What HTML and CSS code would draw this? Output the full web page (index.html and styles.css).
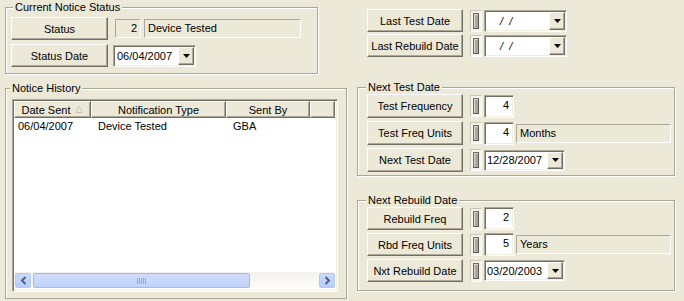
FILE: index.html
```html
<!DOCTYPE html>
<html lang="en">
  <head>
    <meta charset="UTF-8" />
    <link rel="stylesheet" href="styles.css">
    <title>Notice Status</title>
  </head>
  <body>
    <div class="form">
      <div class="left">
        <div class="group cur">
          <div class="group-title">Current Notice Status</div>
          <div class="row r1">
            <button class="btn">Status</button>
            <span class="field num">2</span>
            <span class="field desc">Device Tested</span>
          </div>
          <div class="row r2">
            <button class="btn">Status Date</button>
            <span class="combo date">06/04/2007<span class="drop"><svg width="7" height="4" viewBox="0 0 7 4"><polygon points="0,0 7,0 3.5,4" fill="#000"/></svg></span></span>
          </div>
        </div>

        <div class="group hist">
          <div class="group-title">Notice History</div>
          <div class="list">
            <div class="list-head">
              <span class="hc c1">Date Sent <svg class="sort" width="8" height="7" viewBox="0 0 8 7"><polygon points="4,0.5 7.5,6.5 0.5,6.5" fill="none" stroke="#c8c6bc"/></svg></span>
              <span class="hc c2">Notification Type</span>
              <span class="hc c3">Sent By</span>
              <span class="hc c4"></span>
            </div>
            <div class="list-body">
              <div class="list-row">
                <span class="c1">06/04/2007</span>
                <span class="c2">Device Tested</span>
                <span class="c3">GBA</span>
              </div>
            </div>
            <div class="hscroll">
              <span class="sb-btn"><svg width="7" height="9" viewBox="0 0 7 9"><polyline points="5.5,1 2,4.5 5.5,8" fill="none" stroke="#4d6185" stroke-width="2"/></svg></span>
              <span class="sb-thumb"><svg width="9" height="6" viewBox="0 0 9 6"><path d="M0.5 0v6M2.5 0v6M4.5 0v6M6.5 0v6M8.5 0v6" stroke="#8da9e6"/></svg></span>
              <span class="sb-track"></span>
              <span class="sb-btn"><svg width="7" height="9" viewBox="0 0 7 9"><polyline points="1.5,1 5,4.5 1.5,8" fill="none" stroke="#4d6185" stroke-width="2"/></svg></span>
            </div>
          </div>
        </div>
      </div>

      <div class="right">
        <div class="top">
          <div class="row">
            <button class="btn">Last Test Date</button>
            <span class="ind"><i></i></span>
            <span class="combo wide"><span class="blank">  /  /</span><span class="drop"><svg width="7" height="4" viewBox="0 0 7 4"><polygon points="0,0 7,0 3.5,4" fill="#000"/></svg></span></span>
          </div>
          <div class="row r2">
            <button class="btn">Last Rebuild Date</button>
            <span class="ind"><i></i></span>
            <span class="combo wide"><span class="blank">  /  /</span><span class="drop"><svg width="7" height="4" viewBox="0 0 7 4"><polygon points="0,0 7,0 3.5,4" fill="#000"/></svg></span></span>
          </div>
        </div>

        <div class="group test">
          <div class="group-title">Next Test Date</div>
          <div class="row">
            <button class="btn">Test Frequency</button>
            <span class="ind"><i></i></span>
            <span class="edit">4</span>
          </div>
          <div class="row">
            <button class="btn">Test Freq Units</button>
            <span class="ind"><i></i></span>
            <span class="edit">4</span>
            <span class="field units">Months</span>
          </div>
          <div class="row">
            <button class="btn">Next Test Date</button>
            <span class="ind"><i></i></span>
            <span class="combo short">12/28/2007<span class="drop"><svg width="7" height="4" viewBox="0 0 7 4"><polygon points="0,0 7,0 3.5,4" fill="#000"/></svg></span></span>
          </div>
        </div>

        <div class="group rebuild">
          <div class="group-title">Next Rebuild Date</div>
          <div class="row">
            <button class="btn">Rebuild Freq</button>
            <span class="ind"><i></i></span>
            <span class="edit">2</span>
          </div>
          <div class="row">
            <button class="btn">Rbd Freq Units</button>
            <span class="ind"><i></i></span>
            <span class="edit">5</span>
            <span class="field units">Years</span>
          </div>
          <div class="row">
            <button class="btn">Nxt Rebuild Date</button>
            <span class="ind"><i></i></span>
            <span class="combo short">03/20/2003<span class="drop"><svg width="7" height="4" viewBox="0 0 7 4"><polygon points="0,0 7,0 3.5,4" fill="#000"/></svg></span></span>
          </div>
        </div>
      </div>
    </div>
  </body>
</html>
```

FILE: styles.css
```css
* {
  box-sizing: border-box;
}

body {
  margin: 0;
  background: #ece9d8;
  color: #000;
  font-family: "Liberation Sans", Arial, sans-serif;
  font-size: 11px;
  overflow: hidden;
}

.form {
  display: flex;
  padding-left: 5px;
}

.left {
  width: 342px;
  padding-top: 7px;
}

.right {
  width: 318px;
  margin-left: 10px;
}

/* group boxes */
.group {
  border: 1px solid #aca899;
  box-shadow: inset 1px 1px #fff, 1px 1px #fff;
}

.group-title {
  width: max-content;
  margin-top: -8px;
  padding: 0 2px;
  background: #ece9d8;
  line-height: 14px;
}

.row {
  display: flex;
  align-items: center;
}

.btn {
  width: 96px;
  height: 23px;
  padding: 0;
  font: inherit;
  color: #000;
  background: #ece9d8;
  border: 1px solid;
  border-color: #fff #716f64 #716f64 #fff;
  box-shadow: inset -1px -1px #aca899;
}

.field {
  height: 19px;
  line-height: 17px;
  padding: 0 3px;
  border: 1px solid;
  border-color: #aca899 #fff #fff #aca899;
  white-space: nowrap;
}

.edit {
  width: 30px;
  height: 23px;
  line-height: 19px;
  padding-right: 4px;
  text-align: right;
  background: #fff;
  border: 1px solid;
  border-color: #aca899 #fff #fff #aca899;
  box-shadow: inset 1px 1px #716f64, inset -1px -1px #f1efe2;
  margin-left: 2px;
}

.combo {
  display: flex;
  align-items: center;
  justify-content: space-between;
  height: 22px;
  padding: 1px 1px 1px 3px;
  background: #fff;
  border: 1px solid;
  border-color: #aca899 #fff #fff #aca899;
  box-shadow: inset 1px 1px #716f64, inset -1px -1px #f1efe2;
}

.drop {
  display: flex;
  align-items: center;
  justify-content: center;
  width: 16px;
  height: 18px;
  background: #ece9d8;
  border: 1px solid;
  border-color: #fff #716f64 #716f64 #fff;
  box-shadow: inset -1px -1px #aca899;
}

.blank {
  white-space: pre;
  padding-left: 6px;
  font-style: italic;
}

/* little status bar next to the buttons */
.ind {
  width: 12px;
  height: 22px;
  margin-left: 7px;
  padding: 2px 2px;
  background: #f4f3ee;
  border: 1px solid;
  border-color: #c9c6b6 #fff #fff #c9c6b6;
}

.ind i {
  display: block;
  height: 100%;
  background: #aca899;
  border: 1px solid;
  border-color: #716f64 #5a584e #5a584e #716f64;
  box-shadow: inset 1px 1px #d8d5c8;
}

/* current notice status */
.cur {
  width: 313px;
  height: 67px;
  padding: 0 5px;
}

.cur .group-title {
  margin-left: 2px;
}

.cur .btn {
  width: 97px;
}

.cur .r1 {
  margin-top: 3px;
}

.cur .r2 {
  margin-top: 4px;
}

.num {
  width: 26px;
  margin-left: 7px;
  text-align: right;
}

.desc {
  width: 157px;
  margin-left: 3px;
}

.date {
  width: 83px;
  margin-left: 5px;
}

/* notice history list */
.hist {
  margin-top: 14px;
  height: 211px;
  padding-left: 6px;
}

.hist .group-title {
  margin-left: -2px;
}

.list {
  display: flex;
  flex-direction: column;
  width: 326px;
  height: 193px;
  margin-top: 4px;
  padding: 2px;
  background: #fff;
  border: 1px solid;
  border-color: #aca899 #fff #fff #aca899;
  box-shadow: inset 1px 1px #716f64, inset -1px -1px #f1efe2;
}

.list-head,
.list-row {
  display: flex;
}

.list-head {
  height: 17px;
  margin: -1px 0 0 -1px;
}

.hc {
  display: flex;
  align-items: center;
  justify-content: center;
  background: #ece9d8;
  border: 1px solid;
  border-color: #fff #716f64 #716f64 #fff;
  box-shadow: inset -1px -1px #aca899;
}

.c1 { width: 77px; }
.c2 { width: 135px; }
.c3 { width: 84px; }
.c4 { flex: 1; }

.sort {
  margin-left: 5px;
}

.list-body {
  flex: 1;
}

.list-row {
  height: 16px;
  line-height: 16px;
}

.list-row .c1 { padding-left: 3px; }
.list-row .c2 { padding-left: 6px; }
.list-row .c3 { padding-left: 6px; }

/* xp scroll bar */
.hscroll {
  display: flex;
  height: 17px;
  padding: 1px 0;
  background: linear-gradient(#f3f1ec, #fefefd);
}

.sb-btn,
.sb-thumb {
  display: flex;
  align-items: center;
  justify-content: center;
  height: 15px;
  border: 1px solid #b4c8f6;
  border-radius: 2px;
  background: linear-gradient(#cbd9fd, #b9ccfa);
}

.sb-btn {
  width: 16px;
}

.sb-thumb {
  width: 217px;
  margin-left: 2px;
  border-color: #a3b8ec;
  background: linear-gradient(#cfdcfd, #c1d2fb);
}

.sb-track {
  flex: 1;
}

/* right column */
.top {
  padding: 9px 0 0 10px;
}

.top .r2 {
  margin-top: 2px;
}

.wide {
  width: 83px;
  margin-left: 2px;
}

.short {
  width: 81px;
  height: 21px;
  margin-left: 2px;
  padding-left: 2px;
}

.short .drop {
  height: 17px;
}

.units {
  width: 155px;
  margin-left: 2px;
}

.test {
  margin-top: 30px;
  height: 89px;
  padding-left: 9px;
}

.test .group-title,
.rebuild .group-title {
  margin-left: -1px;
}

.test .row {
  height: 24px;
  margin-bottom: 3px;
}

.test .btn {
  height: 24px;
}

.rebuild {
  margin-top: 24px;
  height: 91px;
  padding-left: 9px;
}

.rebuild .row {
  height: 23px;
  margin-bottom: 3px;
}

.rebuild .row:first-of-type {
  margin-top: 1px;
}
```
